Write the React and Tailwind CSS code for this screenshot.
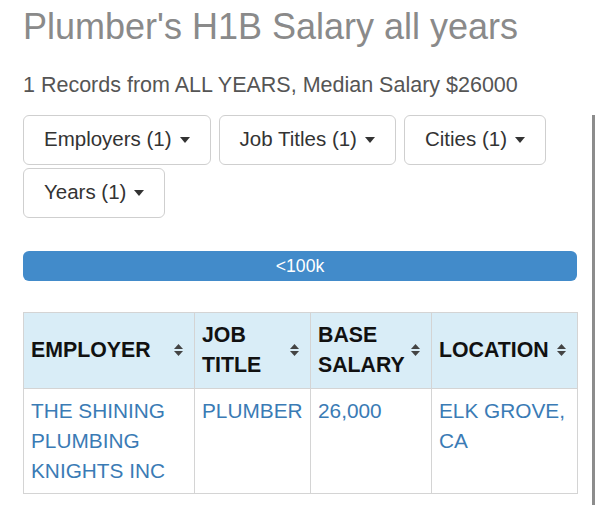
import React from "react";

function Caret() {
  return (
    <span className="inline-block w-0 h-0 border-t-[6px] border-t-[#333] border-x-[5px] border-x-transparent ml-[8px] align-middle" />
  );
}

function SortIcon() {
  return (
    <svg
      className="absolute right-[10px] top-1/2 -translate-y-1/2"
      width="11"
      height="16"
      viewBox="0 0 11 16"
    >
      <path d="M1 7 L5.5 2 L10 7 Z" fill="#444" />
      <path d="M1 9 L10 9 L5.5 14 Z" fill="#444" />
    </svg>
  );
}

function FilterButton({ label }) {
  return (
    <button className="h-[50px] px-[20px] border border-[#cfcfcf] rounded-[6px] bg-white text-[20.5px] text-[#333] flex items-center">
      <span>{label}</span>
      <Caret />
    </button>
  );
}

export default function App() {
  const headers = [
    { label: "EMPLOYER", w: "w-[171px]" },
    { label: "JOB TITLE", w: "w-[116px]" },
    { label: "BASE SALARY", w: "w-[121px]" },
    { label: "LOCATION", w: "w-[146px]" },
  ];
  return (
    <div className="relative w-[600px] h-[505px] overflow-hidden bg-white font-['Liberation_Sans',Arial,sans-serif]">
      <div className="pl-[23px] pr-[23px] pt-[7px]">
        <h1 className="text-[36px] leading-[1.1] text-[#8a8a8a] font-normal">
          Plumber's H1B Salary all years
        </h1>
        <p className="mt-[23px] text-[21.5px] leading-[30px] text-[#555]">
          1 Records from ALL YEARS, Median Salary $26000
        </p>
        <div className="mt-[15px] flex flex-wrap gap-x-[8px] gap-y-[3px]">
          <FilterButton label="Employers (1)" />
          <FilterButton label="Job Titles (1)" />
          <FilterButton label="Cities (1)" />
          <FilterButton label="Years (1)" />
        </div>
        <div className="mt-[33px] h-[30px] rounded-[6px] bg-[#428bca] text-white text-[17.6px] leading-[30px] text-center">
          &lt;100k
        </div>
        <table className="mt-[31px] w-[554px] table-fixed border-collapse border border-[#d4d4d4]">
          <colgroup>
            {headers.map((h) => (
              <col key={h.label} className={h.w} />
            ))}
          </colgroup>
          <thead>
            <tr className="bg-[#d9edf7]">
              {headers.map((h) => (
                <th
                  key={h.label}
                  className="relative border border-[#d4d4d4] pl-[7px] pr-[26px] py-[7.5px] text-left align-middle text-[21.3px] leading-[30px] font-bold text-[#111]"
                >
                  {h.label}
                  <SortIcon />
                </th>
              ))}
            </tr>
          </thead>
          <tbody>
            <tr>
              {[
                "THE SHINING PLUMBING KNIGHTS INC",
                "PLUMBER",
                "26,000",
                "ELK GROVE, CA",
              ].map((t, i) => (
                <td
                  key={i}
                  className="border border-[#d4d4d4] px-[7px] py-[7px] align-top text-[20.8px] leading-[30px] text-[#3a7bb5]"
                >
                  {t}
                </td>
              ))}
            </tr>
          </tbody>
        </table>
      </div>
      <div className="absolute left-[592px] top-[115px] bottom-0 w-[3px] bg-[#8c8c8c]" />
    </div>
  );
}
